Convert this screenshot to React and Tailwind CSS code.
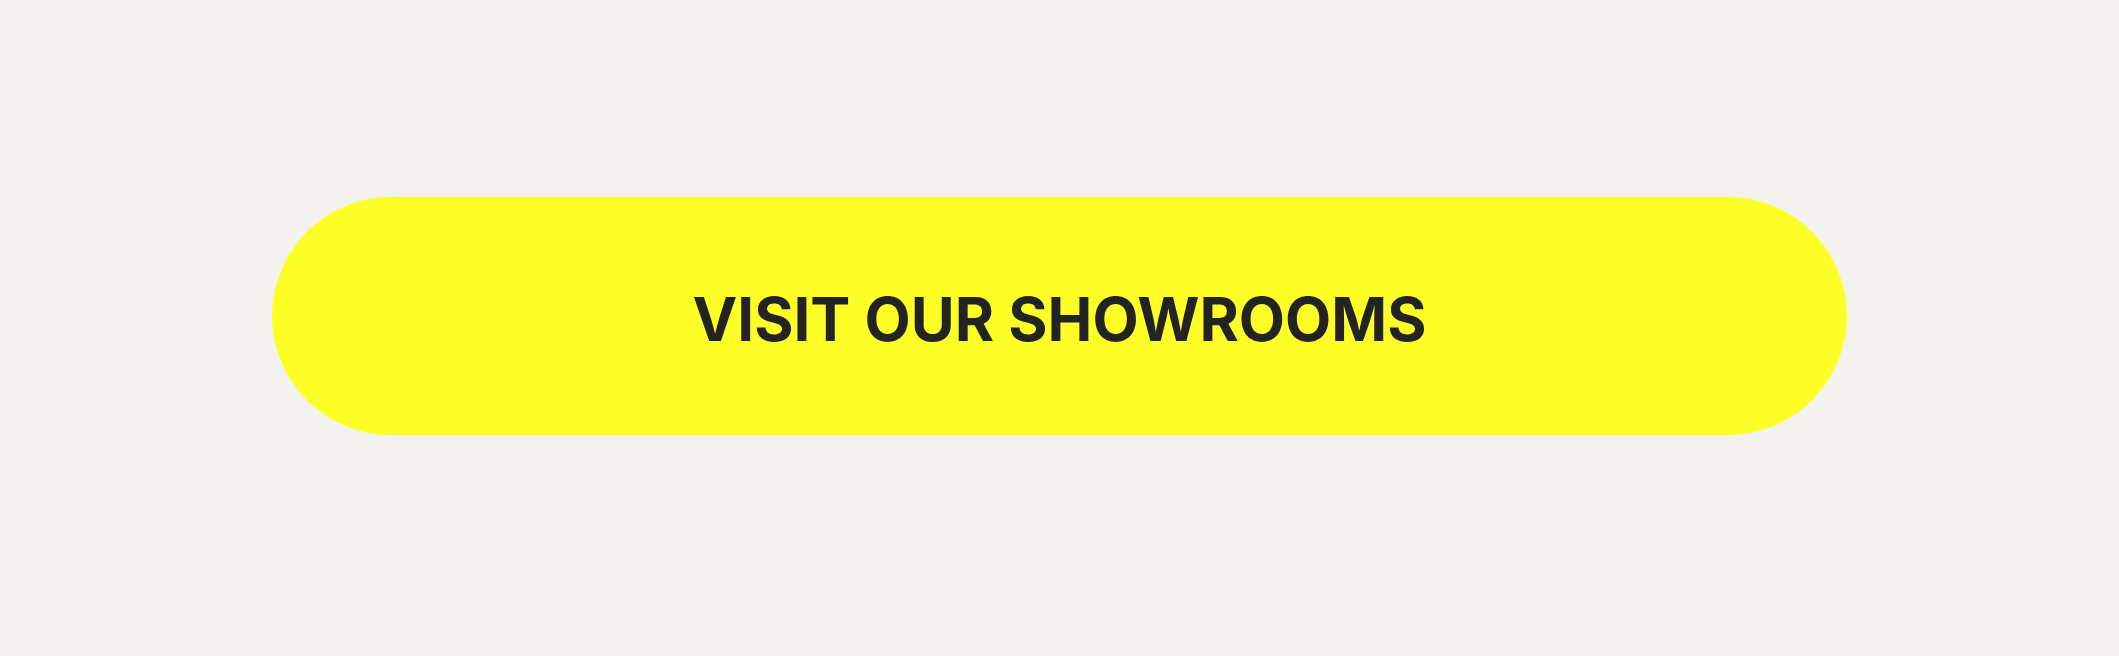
export default function App() {
  return (
    <main className="flex min-h-screen items-start justify-center bg-[#f3f2ee] px-8 py-[197px]">
      <a
        href="#showrooms"
        className="flex w-full max-w-[1575px] items-center justify-center rounded-full bg-[#ffff28] px-8 pt-[86px] pb-[80px] text-center font-['Inter',sans-serif] text-[60px] leading-[72px] font-bold text-[#232321] uppercase"
      >
        Visit our showrooms
      </a>
    </main>
  );
}
